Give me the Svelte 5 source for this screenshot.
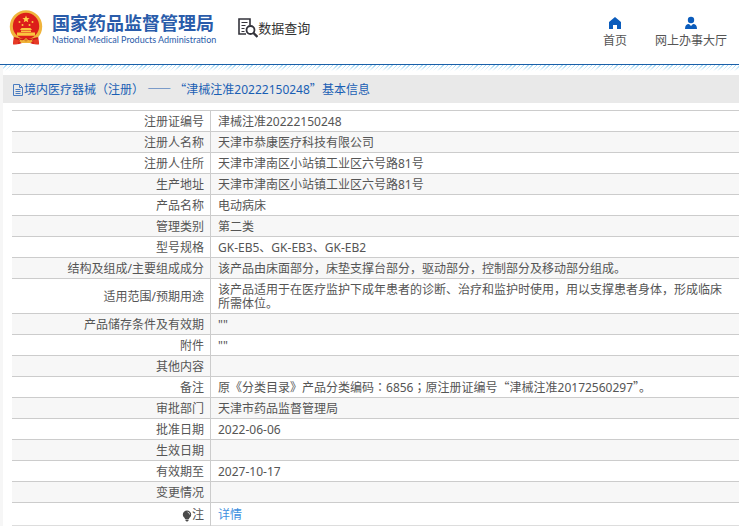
<script>
  const rows = [
    ['注册证编号', '津械注准20222150248'],
    ['注册人名称', '天津市恭康医疗科技有限公司'],
    ['注册人住所', '天津市津南区小站镇工业区六号路81号'],
    ['生产地址', '天津市津南区小站镇工业区六号路81号'],
    ['产品名称', '电动病床'],
    ['管理类别', '第二类'],
    ['型号规格', 'GK-EB5、GK-EB3、GK-EB2'],
    ['结构及组成/主要组成成分', '该产品由床面部分，床垫支撑台部分，驱动部分，控制部分及移动部分组成。'],
    ['适用范围/预期用途', '该产品适用于在医疗监护下成年患者的诊断、治疗和监护时使用，用以支撑患者身体，形成临床所需体位。'],
    ['产品储存条件及有效期', '""'],
    ['附件', '""'],
    ['其他内容', ''],
    ['备注', '原《分类目录》产品分类编码：6856；原注册证编号“津械注准20172560297”。'],
    ['审批部门', '天津市药品监督管理局'],
    ['批准日期', '2022-06-06'],
    ['生效日期', ''],
    ['有效期至', '2027-10-17'],
    ['变更情况', '']
  ];
  const title = '境内医疗器械（注册） —— “津械注准20222150248”基本信息';
  // Curly quotes and dashes take full-width forms; colons and brackets sit centred in their cell.
  const parts = (text) => text.split(/([“”—]+|[：；（）])/).filter(Boolean);
  const isWide = (part) => /^[“”—]/.test(part);
  const isCentred = (part) => /^[：；（）]$/.test(part);
</script>

{#snippet mixed(text)}
  {#each parts(text) as part}{#if isWide(part)}<span class="wide">{part}</span>{:else if isCentred(part)}<span class="centred" lang="zh-TW">{part}</span>{:else}{part}{/if}{/each}
{/snippet}

<div class="page" lang="zh-CN">
  <header>
    <a class="brand" href="#home">
      <svg class="emblem" viewBox="0 0 34 36" aria-hidden="true">
        <path d="M5 25h24l1 9q-5 1-9-1h-8q-4 2-9 1z" fill="#d8201b" />
        <circle cx="17" cy="16.500" r="16.200" fill="#f0b43c" />
        <circle cx="17" cy="16" r="13.200" fill="#dc1e1a" />
        <path d="M17 5.600l1 2.400 2.600.2-2 1.600.7 2.500-2.300-1.400-2.300 1.400.7-2.500-2-1.600 2.600-.2z" fill="#ffd04a" />
        <g fill="#fbc53f">
          <circle cx="10.500" cy="12" r="1" /><circle cx="13.500" cy="15" r="1" /><circle cx="20.500" cy="15" r="1" /><circle cx="23.500" cy="12" r="1" />
          <path d="M12.500 18h9l1.500 2H11zM12 20.500h10v1.600H12zM8 22.500h18v3.200H8z" />
        </g>
        <path d="M5 27q12 4 24 0l-1 3q-11 3-22 0z" fill="#c91a17" />
        <path d="M10 29q4 3 7-1 3 4 7 1l-2 4H12z" fill="#efb239" />
        <circle cx="17" cy="30" r="1.600" fill="#d98a25" />
        <path d="M5 29l5 1-1 4-5 .4zM29 29l-5 1 1 4 5 .4z" fill="#e63a25" />
      </svg>
      <span class="names">
        <strong>国家药品监督管理局</strong>
        <small>National Medical Products Administration</small>
      </span>
    </a>
    <a class="query" href="#query">
      <svg viewBox="0 0 20 20" fill="none" stroke="#33333b" aria-hidden="true">
        <path d="M8 16H1V1h11v6" stroke-width="1.600" />
        <path d="M3.500 4.500h6M3.500 7.500h4M3.500 10.500h3M3.500 13.500h3" stroke-width="1.200" />
        <circle cx="12.500" cy="12" r="4" stroke-width="1.800" />
        <path d="M15.500 15l4 4" stroke-width="2.400" />
      </svg>
      <span>数据查询</span>
    </a>
    <nav>
      <a href="#index">
        <svg viewBox="0 0 14 14" fill="#0b5cbc" aria-hidden="true"><path d="M7 1l6 5v7H9V9H5v4H1V6z" /></svg>
        <span>首页</span>
      </a>
      <a href="#hall">
        <svg viewBox="0 0 14 14" fill="#0b5cbc" aria-hidden="true"><circle cx="7" cy="4" r="3.200" /><path d="M1 13q0-5 4-5l2 2 2-2q4 0 4 5z" /></svg>
        <span>网上办事大厅</span>
      </a>
    </nav>
  </header>
  <main>
    <h1>
      <svg viewBox="0 0 12 12" fill="none" stroke="#4a7cc0" aria-hidden="true"><path d="M1.500 .5h6l3 3v8h-9zM7.500 .5v3h3M3.500 5.500h5M3.500 7.500h5M3.500 9.500h5" /></svg>
      <span>{@render mixed(title)}</span>
    </h1>
    <table>
      <tbody>
        {#each rows as [label, value]}
          <tr><th scope="row">{label}</th><td>{@render mixed(value)}</td></tr>
        {/each}
        <tr class="note">
          <th scope="row"><svg viewBox="0 0 10 12" aria-hidden="true"><path d="M5 .5a4.200 4.200 0 0 1 4.200 4.200C9.200 7 7 7.500 7 9H3C3 7.500.8 7 .8 4.700A4.200 4.200 0 0 1 5 .5zM3.400 9.600h3.200v1L5.500 11.500h-1l-1.100-.9z" fill="#4a4a4a" /><path d="M5.500 2q2 .4 2.200 2.500" fill="none" stroke="#ccc" /></svg>注</th>
          <td><a href="#detail">详情</a></td>
        </tr>
      </tbody>
    </table>
  </main>
</div>

<style>
  :global(body) {
    margin: 0;
    background: #fff;
  }
  .page {
    font: 12px/14px "Noto Sans", "Noto Sans CJK SC", sans-serif;
    color: #555;
    overflow: hidden;
  }
  a {
    color: inherit;
    text-decoration: none;
  }
  .wide {
    font-family: "Noto Sans CJK SC", sans-serif;
    line-height: 0;
  }
  .centred {
    font-family: "Noto Sans CJK TC", sans-serif;
    line-height: 0;
  }
  header {
    display: flex;
    align-items: center;
    height: 64px;
    padding: 0 12px 0 9px;
    border-bottom: 1px solid #1a5fa8;
  }
  .brand {
    display: flex;
    align-items: center;
    gap: 9px;
    margin-bottom: 8px;
    color: #2a5caa;
  }
  .emblem {
    width: 34px;
    height: 36px;
  }
  .names {
    display: flex;
    flex-direction: column;
    white-space: nowrap;
  }
  strong {
    font: 700 18px/24px "Noto Sans CJK SC", sans-serif;
  }
  small {
    font: 9px/12px Lato, sans-serif;
  }
  .query {
    display: flex;
    align-items: center;
    margin: 0 0 8px 22px;
    color: #333;
    font-size: 13px;
    line-height: 20px;
    white-space: nowrap;
  }
  .query svg {
    width: 20px;
    height: 20px;
  }
  nav {
    display: flex;
    gap: 28px;
    margin-left: auto;
    white-space: nowrap;
  }
  nav a {
    display: flex;
    flex-direction: column;
    align-items: center;
    gap: 4px;
  }
  nav svg {
    width: 14px;
    height: 14px;
  }
  main {
    border-left: 3px solid #f6f6f6;
  }
  main::before {
    content: "";
    display: block;
    height: 10px;
    background:
      linear-gradient(transparent, #fff 6px),
      repeating-linear-gradient(135deg, #fff 0 2px, #9fd6f3 2px 3px);
  }
  h1 {
    display: flex;
    align-items: center;
    margin: 0 0 7px;
    padding: 8px 9px 6px;
    background: #e9e9e9;
    color: #1a5fb4;
    font: inherit;
  }
  h1 svg {
    width: 12px;
    height: 12px;
  }
  table {
    width: calc(100% - 9px);
    margin-left: 9px;
    border-collapse: collapse;
  }
  tr {
    border-top: 1px solid #ccc;
  }
  tr:nth-child(even) {
    background: #f7f7f7;
  }
  th,
  td {
    height: 14px;
    padding: 4px 6px 2px;
    font-weight: 400;
    text-align: left;
  }
  td {
    padding-right: 14px;
    padding-left: 7px;
  }
  th {
    width: 186px;
    text-align: right;
    border-right: 1px solid #ccc;
  }
  .note {
    border-bottom: 1px solid #ddd;
    background: #fff;
  }
  .note td,
  .note th {
    height: 16px;
  }
  .note svg {
    width: 10px;
    height: 12px;
    vertical-align: middle;
  }
  .note a {
    color: #3d8fe0;
  }
</style>
